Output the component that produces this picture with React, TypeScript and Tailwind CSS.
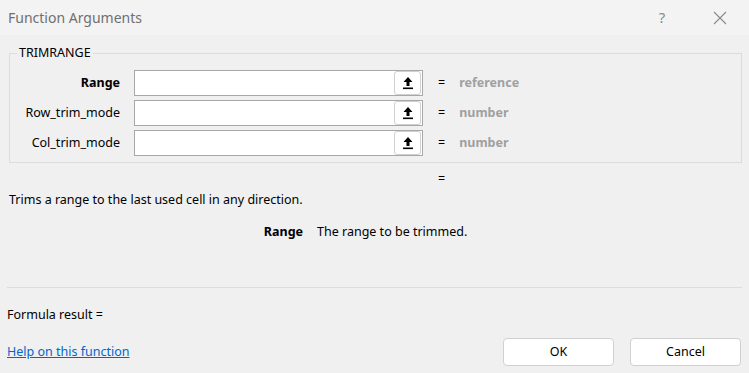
import React from "react"

const font = { fontFamily: '"Noto Sans", "Open Sans", sans-serif' }

function RefIcon() {
  return (
    <svg width="12" height="14" viewBox="0 0 12 14">
      <path d="M6 1 L1.5 6 L4.5 6 L4.5 10 L7.5 10 L7.5 6 L10.5 6 Z" fill="#000" />
      <rect x="1" y="11.5" width="10" height="1.6" fill="#000" />
    </svg>
  )
}

interface ArgRowProps {
  label: string
  value: string
  bold?: boolean
}

function ArgRow({ label, value, bold }: ArgRowProps) {
  return (
    <div className="flex items-center h-[26px]">
      <div className={`w-[103px] text-right text-[12.5px] text-black ${bold ? "font-bold" : ""}`}>{label}</div>
      <div className="ml-[14px] w-[289px] h-[26px] bg-white border border-[#a8a8a8] flex items-center justify-end pr-[1px]">
        <div className="w-[27px] h-[24px] rounded-[3px] border border-[#d0d0d0] bg-white flex items-center justify-center">
          <RefIcon />
        </div>
      </div>
      <div className="ml-[15px] text-[12.5px] text-black">=</div>
      <div className="ml-[14px] text-[12.5px] font-bold text-[#a0a0a0]">{value}</div>
    </div>
  )
}

export default function App() {
  return (
    <div className="w-[749px] h-[373px] bg-[#f0f0f0] flex flex-col overflow-hidden" style={font}>
      <div className="h-[35px] bg-[#f3f3f3] flex items-center pl-[8px]">
        <div className="text-[14px] text-[#707070] flex-1">Function Arguments</div>
        <div className="w-[58px] text-center text-[15px] text-[#8a8a8a]">?</div>
        <div className="w-[58px] flex items-center justify-center">
          <svg width="14" height="14" viewBox="0 0 14 14">
            <path d="M1 1 L13 13 M13 1 L1 13" stroke="#8a8a8a" strokeWidth="1.1" />
          </svg>
        </div>
      </div>

      <div className="flex flex-col pl-[9px] pr-[7px]">
        <fieldset className="mt-[11px] border border-[#dcdcdc] px-[7px] pt-[10px] pb-[6px] flex flex-col gap-[4px]">
          <legend className="px-[2px] text-[12.5px] leading-[14px] text-black">TRIMRANGE</legend>
          <ArgRow label="Range" value="reference" bold />
          <ArgRow label="Row_trim_mode" value="number" />
          <ArgRow label="Col_trim_mode" value="number" />
        </fieldset>

        <div className="mt-[9px] pl-[429px] text-[12.5px] leading-[14px] text-black">=</div>
        <div className="mt-[7px] text-[12.5px] leading-[14px] text-black">
          Trims a range to the last used cell in any direction.
        </div>
        <div className="mt-[18px] flex text-[12.5px] leading-[14px] text-black">
          <div className="w-[294px] text-right font-bold">Range</div>
          <div className="ml-[14px]">The range to be trimmed.</div>
        </div>
      </div>

      <div className="mt-[48px] mx-[7px] border-t border-[#dcdcdc]" />

      <div className="mt-[20px] pl-[7px] text-[12.5px] leading-[14px] text-black">Formula result =</div>

      <div className="mt-[16px] flex items-center pl-[7px] pr-[8px]">
        <a className="flex-1 text-[12.5px] text-[#0066cc] underline" href="#">Help on this function</a>
        <button className="w-[111px] h-[28px] bg-white border border-[#d0d0d0] rounded-[4px] text-[12.5px] text-black">OK</button>
        <button className="ml-[16px] w-[111px] h-[28px] bg-white border border-[#d0d0d0] rounded-[4px] text-[12.5px] text-black">Cancel</button>
      </div>
    </div>
  )
}
